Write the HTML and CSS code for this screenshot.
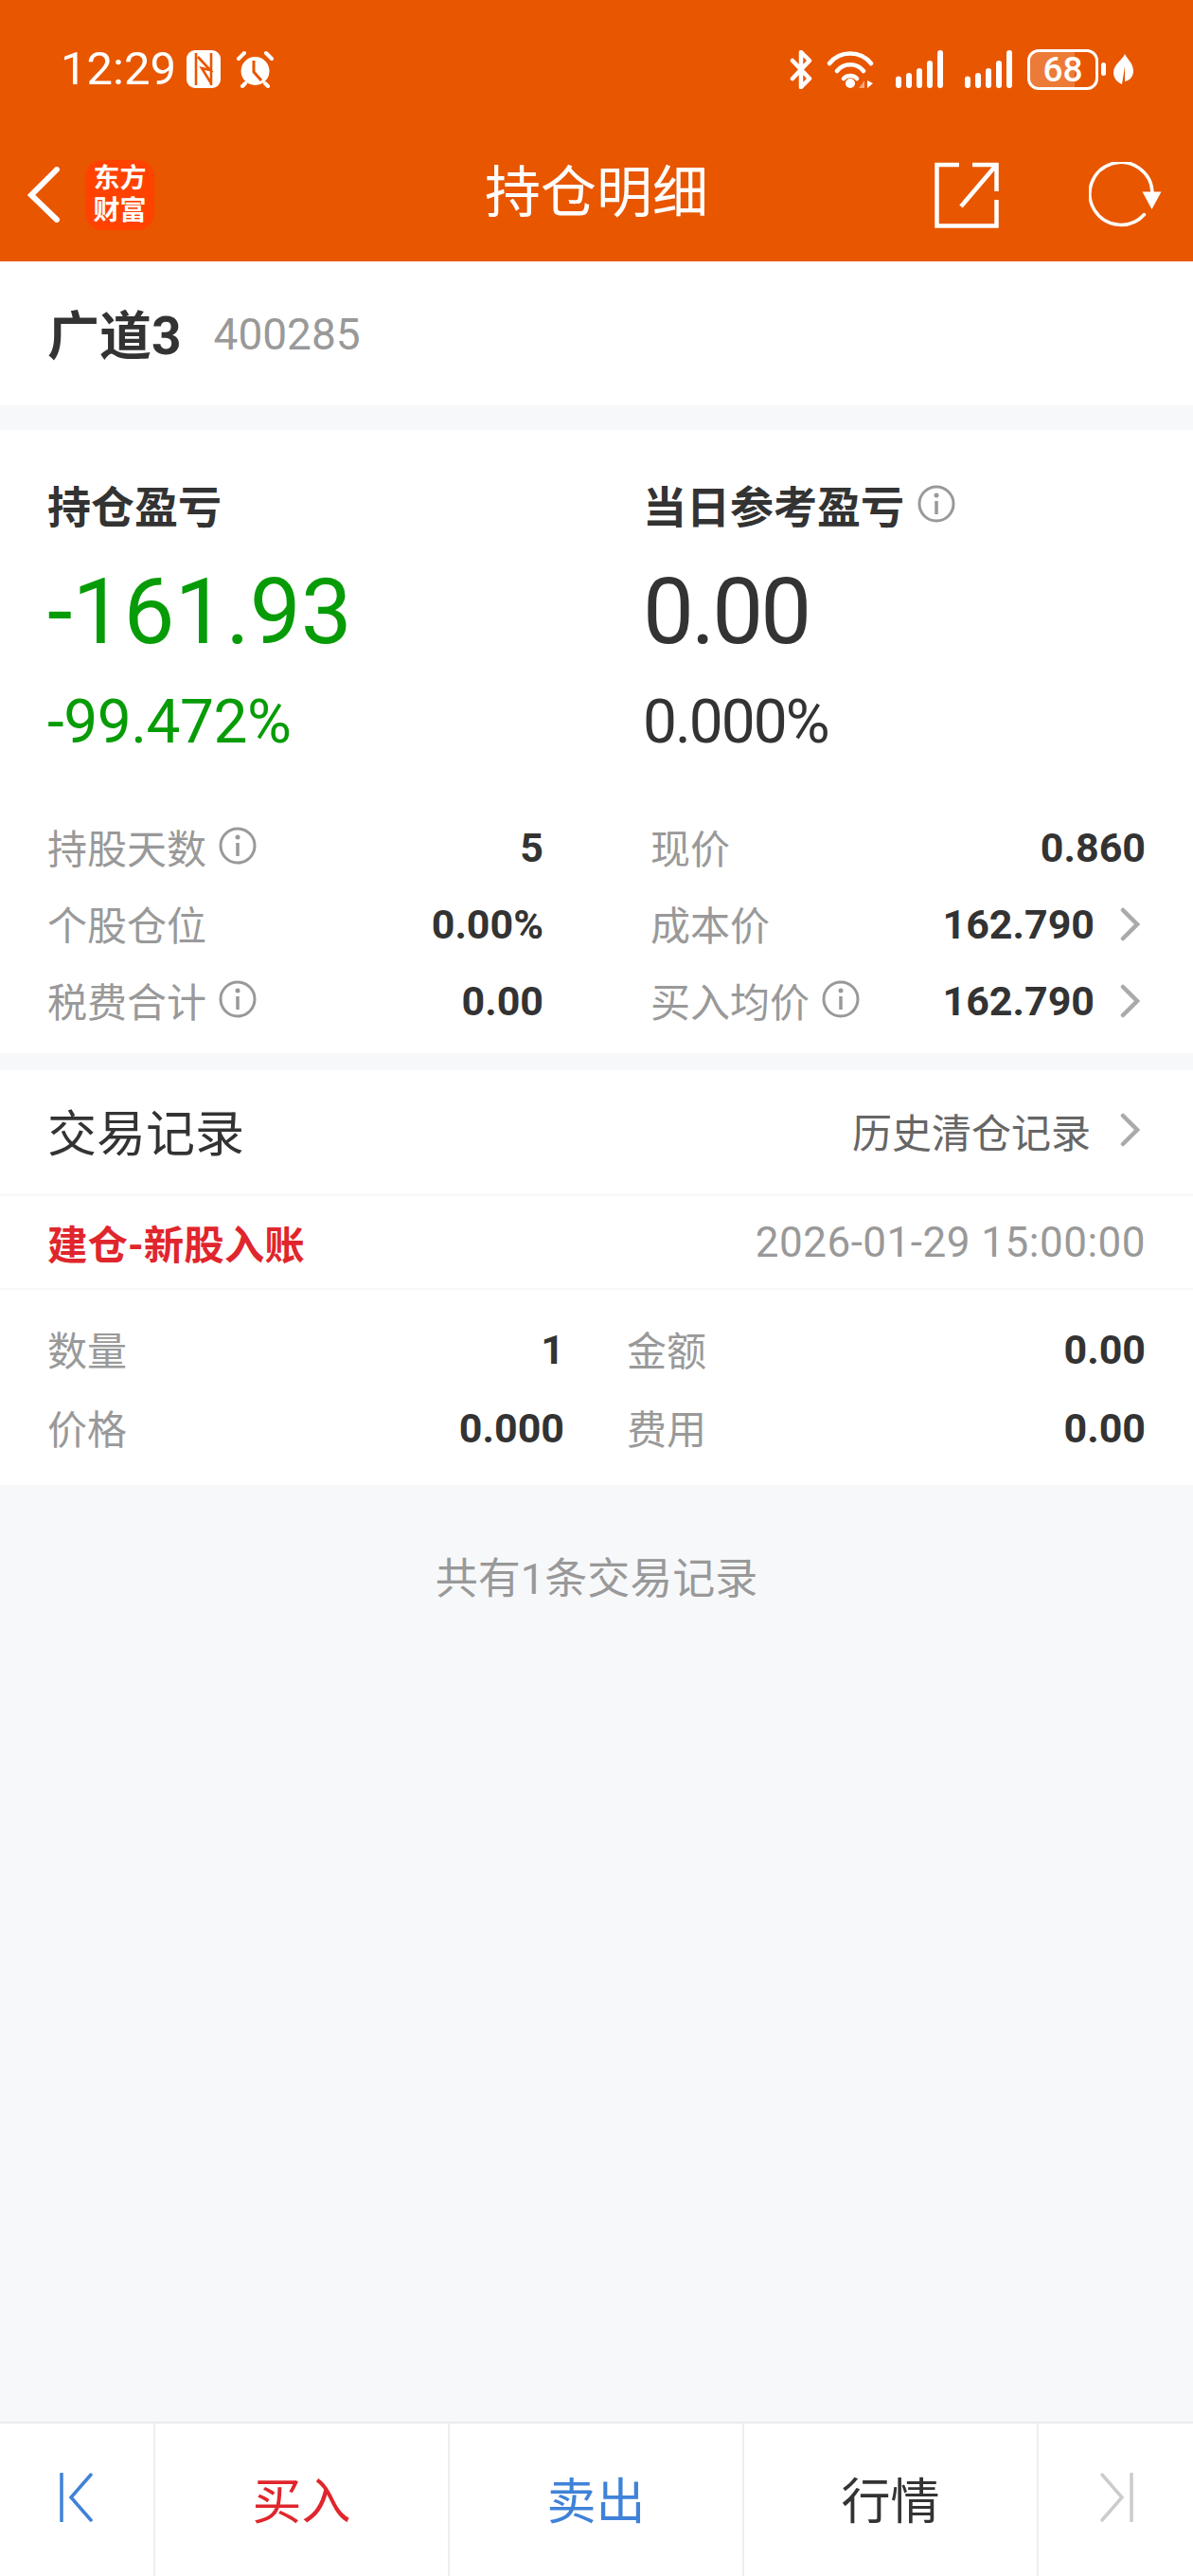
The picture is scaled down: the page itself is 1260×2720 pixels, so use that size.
FILE: index.html
```html
<!DOCTYPE html>
<html lang="zh-CN">
<head>
    <meta charset="UTF-8">
    <title>持仓明细</title>
    <link rel="stylesheet" href="styles.css">
</head>
<body>
    <div class="page">
        <header class="topbar">
            <div class="status">
                <div class="status-left">
                    <span class="clock">12:29</span>
                    <svg class="nfc" viewBox="0 0 36 40"><rect width="36" height="40" rx="9" fill="#fff"/><path d="M10 3v34M26 3v34M12 7l13 14-9-2 10 16" stroke="#e85600" stroke-width="2.6" fill="none"/></svg>
                    <svg class="alarm" viewBox="0 0 41 41"><circle cx="20.5" cy="22" r="15" fill="#fff"/><path d="M3 9l6-6M38 9l-6-6M7 38l3-3M34 38l-3-3" stroke="#fff" stroke-width="4" stroke-linecap="round"/><path d="M19 11v12l8 9" stroke="#e85600" stroke-width="3" fill="none"/></svg>
                </div>
                <div class="status-right">
                    <svg class="bt" viewBox="0 0 24 41"><path d="M3 30L21 11 12 2v37l9-9L3 11" stroke="#fff" stroke-width="4.5" fill="none" stroke-linecap="round" stroke-linejoin="round"/></svg>
                    <svg class="wifi" viewBox="0 0 50 40"><path d="M3 14C14 0 36 0 47 14M11 22c7-9 21-9 28 0M18 30c3-4 11-4 14 0" stroke="#fff" stroke-width="4.5" fill="none" stroke-linecap="round"/><circle cx="25" cy="35" r="5" fill="#fff"/><path d="M40 32v8h-6z" fill="#f5a678"/><path d="M43 32v8l6-5z" fill="#fff"/></svg>
                    <svg class="signal" viewBox="0 0 50 40"><path d="M3 37v-6.500M14 37V27M25 37V22M36 37V14M47 37V3" stroke="#fff" stroke-width="6" stroke-linecap="round"/></svg>
                    <svg class="signal" viewBox="0 0 50 40"><path d="M3 37v-6.500M14 37V27M25 37V22M36 37V14M47 37V3" stroke="#fff" stroke-width="6" stroke-linecap="round"/></svg>
                    <div class="battery"><span class="battery-fill"></span><span class="battery-num">68</span></div>
                    <span class="battery-cap"></span>
                    <svg class="leaf" viewBox="0 0 21 32"><path d="M12 0c3 6 9 10 9 18 0 6-4 10-9 11V13l-3 19C4 30 0 25 0 20 0 11 9 7 12 0z" fill="#fff"/></svg>
                </div>
            </div>
            <nav class="navbar">
                <div class="nav-left">
                    <svg class="back" viewBox="0 0 35 59"><path d="M31 3L4 30l27 26" stroke="#fff" stroke-width="6" fill="none" stroke-linecap="round"/></svg>
                    <div class="logo">东方<br>财富</div>
                </div>
                <h1 class="nav-title">持仓明细</h1>
                <div class="nav-right">
                    <svg class="share" viewBox="0 0 68 70"><path d="M26 3H2.500v64.500h63V40M40 3h25.500v28M65.500 3L28 47" stroke="#fff" stroke-width="4.500" fill="none"/></svg>
                    <svg class="refresh" viewBox="0 0 77 70"><path d="M58.500 55.500A33 33 0 1 1 67 32.500" stroke="#fff" stroke-width="3.500" fill="none" stroke-linecap="round"/><path d="M56.500 31.500h20L66.500 50z" fill="#fff"/></svg>
                </div>
            </nav>
        </header>

        <section class="stock">
            <span class="stock-name">广道3</span>
            <span class="stock-code">400285</span>
        </section>

        <section class="profit">
            <div class="profit-cols">
                <div class="profit-col">
                    <div class="profit-label">持仓盈亏</div>
                    <div class="profit-value is-green">-161.93</div>
                    <div class="profit-rate is-green">-99.472%</div>
                </div>
                <div class="profit-col">
                    <div class="profit-label">当日参考盈亏
                        <svg class="info info--label" viewBox="0 0 40 40"><circle cx="20" cy="20" r="18" fill="none" stroke="#999" stroke-width="3"/><circle cx="20" cy="11" r="2.500" fill="#999"/><path d="M20 17v14" stroke="#999" stroke-width="3.500"/></svg>
                    </div>
                    <div class="profit-value is-tight">0.00</div>
                    <div class="profit-rate is-tight">0.000%</div>
                </div>
            </div>
            <div class="metrics">
                <div class="metric">
                    <span class="metric-name">持股天数<svg class="info" viewBox="0 0 40 40"><circle cx="20" cy="20" r="18" fill="none" stroke="#999" stroke-width="3"/><circle cx="20" cy="11" r="2.500" fill="#999"/><path d="M20 17v14" stroke="#999" stroke-width="3.500"/></svg></span>
                    <span class="metric-value">5</span>
                </div>
                <div class="metric">
                    <span class="metric-name">现价</span>
                    <span class="metric-value">0.860</span>
                </div>
                <div class="metric">
                    <span class="metric-name">个股仓位</span>
                    <span class="metric-value">0.00%</span>
                </div>
                <div class="metric">
                    <span class="metric-name">成本价</span>
                    <span class="metric-value">162.790</span>
                    <svg class="chev" viewBox="0 0 21 36"><path d="M3 3l15 15L3 33" stroke="#aaa" stroke-width="4.500" fill="none" stroke-linecap="round"/></svg>
                </div>
                <div class="metric">
                    <span class="metric-name">税费合计<svg class="info" viewBox="0 0 40 40"><circle cx="20" cy="20" r="18" fill="none" stroke="#999" stroke-width="3"/><circle cx="20" cy="11" r="2.500" fill="#999"/><path d="M20 17v14" stroke="#999" stroke-width="3.500"/></svg></span>
                    <span class="metric-value">0.00</span>
                </div>
                <div class="metric">
                    <span class="metric-name">买入均价<svg class="info" viewBox="0 0 40 40"><circle cx="20" cy="20" r="18" fill="none" stroke="#999" stroke-width="3"/><circle cx="20" cy="11" r="2.500" fill="#999"/><path d="M20 17v14" stroke="#999" stroke-width="3.500"/></svg></span>
                    <span class="metric-value">162.790</span>
                    <svg class="chev" viewBox="0 0 21 36"><path d="M3 3l15 15L3 33" stroke="#aaa" stroke-width="4.500" fill="none" stroke-linecap="round"/></svg>
                </div>
            </div>
        </section>

        <section class="records">
            <div class="records-head">
                <span class="records-title">交易记录</span>
                <span class="records-link">历史清仓记录<svg class="chev chev--link" viewBox="0 0 21 36"><path d="M3 3l15 15L3 33" stroke="#aaa" stroke-width="4.500" fill="none" stroke-linecap="round"/></svg></span>
            </div>
            <div class="record-top">
                <span class="record-type">建仓-新股入账</span>
                <span class="record-time">2026-01-29 15:00:00</span>
            </div>
            <div class="record-grid">
                <div class="record-cell"><span class="metric-name">数量</span><span class="metric-value">1</span></div>
                <div class="record-cell"><span class="metric-name">金额</span><span class="metric-value">0.00</span></div>
                <div class="record-cell"><span class="metric-name">价格</span><span class="metric-value">0.000</span></div>
                <div class="record-cell"><span class="metric-name">费用</span><span class="metric-value">0.00</span></div>
            </div>
        </section>

        <div class="summary">共有1条交易记录</div>

        <footer class="tabbar">
            <div class="tab tab--arrow"><svg class="tab-icon" viewBox="0 0 36 52"><path d="M2 1v50M33 2L12 26l21 24" stroke="#3f82d8" stroke-width="3.500" fill="none" stroke-linecap="round"/></svg></div>
            <div class="tab tab--wide is-red">买入</div>
            <div class="tab tab--wide is-blue">卖出</div>
            <div class="tab tab--wide">行情</div>
            <div class="tab tab--arrow"><svg class="tab-icon" viewBox="0 0 36 52"><path d="M34 1v50M3 2l21 24L3 50" stroke="#ccc" stroke-width="3.500" fill="none" stroke-linecap="round"/></svg></div>
        </footer>
    </div>
</body>
</html>
```

FILE: styles.css
```css
* {
    box-sizing: border-box;
}

html, body {
    margin: 0;
    padding: 0;
}

body {
    font-family: "Roboto", "Noto Sans CJK SC", sans-serif;
    color: #333;
    background: #f7f8fa;
}

.page {
    width: 1260px;
    height: 2720px;
    display: flex;
    flex-direction: column;
}

/* top bar */
.topbar {
    height: 276px;
    background: #e85600;
    color: #fff;
}

.status {
    height: 132px;
    padding: 50px 63px 0 64px;
    display: flex;
    justify-content: space-between;
    align-items: flex-start;
}

.status-left, .status-right {
    display: flex;
    align-items: center;
    height: 46px;
}

.clock {
    font-size: 49px;
    line-height: 46px;
}

.nfc {
    width: 36px;
    height: 40px;
    margin-left: 11px;
}

.alarm {
    width: 41px;
    height: 41px;
    margin-left: 16px;
}

.bt {
    width: 24px;
    height: 41px;
}

.wifi {
    width: 50px;
    height: 40px;
    margin-left: 15px;
}

.signal {
    width: 50px;
    height: 40px;
    margin-left: 23px;
}

.battery {
    position: relative;
    width: 75px;
    height: 43px;
    margin-left: 16px;
    border: 3px solid #fff;
    border-radius: 12px;
    display: flex;
    align-items: center;
    justify-content: center;
    overflow: hidden;
}

.battery-fill {
    position: absolute;
    left: 0;
    top: 0;
    bottom: 0;
    width: 68%;
    background: rgba(255, 255, 255, 0.22);
}

.battery-num {
    position: relative;
    font-size: 37px;
    font-weight: 500;
    line-height: 1;
}

.battery-cap {
    width: 5px;
    height: 14px;
    margin-left: 3px;
    background: #fff;
    border-radius: 3px;
}

.leaf {
    width: 21px;
    height: 32px;
    margin-left: 8px;
}

.navbar {
    position: relative;
    height: 144px;
    display: flex;
    justify-content: space-between;
    align-items: center;
    padding: 3px 33px 0 29px;
}

.nav-left, .nav-right {
    display: flex;
    align-items: center;
}

.back {
    width: 35px;
    height: 59px;
}

.logo {
    width: 73px;
    height: 74px;
    margin-left: 26px;
    background: #ff4200;
    border-radius: 18px;
    font-size: 28px;
    line-height: 34px;
    text-align: center;
    font-weight: 700;
    padding-top: 3px;
}

.nav-title {
    position: absolute;
    left: 0;
    right: 0;
    top: 37px;
    margin: 0;
    text-align: center;
    font-size: 59px;
    line-height: 70px;
    font-weight: 400;
}

.share {
    width: 68px;
    height: 70px;
}

.refresh {
    width: 77px;
    height: 70px;
    margin-left: 95px;
}

/* stock name */
.stock {
    height: 152px;
    background: #fff;
    margin-bottom: 26px;
    padding: 0 50px;
    padding-bottom: 4px;
    display: flex;
    align-items: center;
}

.stock-name {
    font-size: 55px;
    font-weight: 700;
}

.stock-code {
    margin-left: 34px;
    margin-top: 6px;
    font-size: 46px;
    color: #999;
}

/* profit block */
.profit {
    height: 658px;
    background: #fff;
    padding: 48px 50px 0;
    margin-bottom: 18px;
}

.profit-cols {
    display: grid;
    grid-template-columns: 629px 1fr;
}

.profit-label {
    display: flex;
    align-items: center;
    height: 60px;
    font-size: 46px;
    font-weight: 700;
}

.profit-value {
    margin-top: 34px;
    height: 100px;
    font-size: 96px;
    line-height: 100px;
}

.profit-rate {
    margin-top: 33px;
    height: 68px;
    font-size: 64px;
    line-height: 68px;
    letter-spacing: -0.5px;
}

.profit-value.is-tight {
    letter-spacing: -3px;
}

.profit-rate.is-tight {
    letter-spacing: -2px;
}

.is-green {
    color: #079c07;
}

.metrics {
    margin-top: 57px;
    display: grid;
    grid-template-columns: 524px 1fr;
    column-gap: 113px;
}

.metric {
    display: flex;
    align-items: center;
    height: 81px;
}

.metric-name {
    display: flex;
    align-items: center;
    flex: 1;
    padding-bottom: 3px;
    font-size: 42px;
    color: #999;
}

.metric-value {
    font-size: 43px;
    font-weight: 700;
    color: #333;
}

.info {
    width: 40px;
    height: 40px;
    margin-left: 13px;
}

.info--label {
    margin-left: 14px;
}

.chev {
    width: 21px;
    height: 36px;
    margin-left: 27px;
    margin-right: 6px;
}

/* records */
.records {
    background: #fff;
}

.records-head {
    height: 130px;
    padding: 0 50px 4px;
    display: flex;
    justify-content: space-between;
    align-items: center;
}

.records-title {
    font-size: 52px;
}

.records-link {
    display: flex;
    align-items: center;
    font-size: 42px;
    color: #666;
}

.chev--link {
    margin-left: 31px;
}

.record-top {
    height: 102px;
    padding: 0 50px;
    border-top: 3px solid #f7f8fa;
    border-bottom: 2px solid #f7f8fa;
    display: flex;
    justify-content: space-between;
    align-items: center;
}

.record-type {
    font-size: 42.5px;
    font-weight: 700;
    color: #e0262c;
}

.record-time {
    font-size: 44px;
    letter-spacing: 0.5px;
    color: #999;
}

.record-grid {
    height: 206px;
    padding: 21px 50px 0;
    display: grid;
    grid-template-columns: 546px 1fr;
    grid-auto-rows: 83px;
    column-gap: 66px;
}

.record-cell {
    display: flex;
    align-items: center;
}

.summary {
    flex: 1;
    padding-top: 70px;
    text-align: center;
    font-size: 45px;
    line-height: 60px;
    color: #999;
}

/* bottom tabs */
.tabbar {
    height: 163px;
    background: #fff;
    border-top: 2px solid #ebebeb;
    display: flex;
}

.tab {
    display: flex;
    align-items: center;
    justify-content: center;
    padding-bottom: 5px;
    font-size: 52px;
    border-right: 2px solid #eee;
}

.tab:last-child {
    border-right: none;
}

.tab--arrow {
    width: 164px;
}

.tab--arrow:last-child {
    width: 163px;
}

.tab--wide {
    width: 311px;
}

.tab-icon {
    width: 36px;
    height: 52px;
}

.is-red {
    color: #e0262c;
}

.is-blue {
    color: #3f82d8;
}
```
